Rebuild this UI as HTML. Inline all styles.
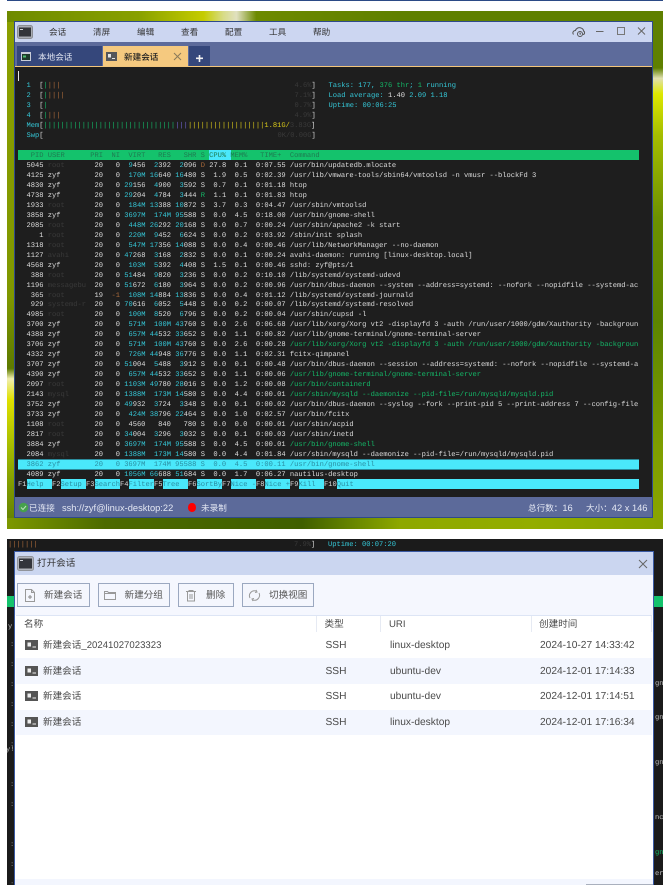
<!DOCTYPE html>
<html><head><meta charset="utf-8"><style>
*{margin:0;padding:0;box-sizing:border-box}
html,body{width:663px;height:885px;overflow:hidden;background:#fff}
body{position:relative;font-family:"Liberation Sans","Noto Sans CJK SC",sans-serif;text-rendering:geometricPrecision;filter:blur(.3px)}
.a{position:absolute}
.t{position:absolute;white-space:nowrap;line-height:12px}
pre{position:absolute;margin-top:2px;font-family:"Liberation Mono",monospace;font-size:7.09px;line-height:9.97px;color:#dcdcdc;text-rendering:geometricPrecision;white-space:pre}
pre i{font-style:normal;color:#35c6d6}
pre s{text-decoration:none;color:#3a3a3a}
pre em{font-style:normal;color:#14b868}
pre u{text-decoration:none;color:#a8693a}
pre b{font-weight:normal;color:#d8c81a}
pre q{quotes:none;color:#6e62c8}
pre q:before,pre q:after{content:none}
pre .h{color:#1f7a50}
pre .sel{color:#2b8ea2}
pre .v{position:absolute;left:276.5px;color:#3a3a3a}
pre .w{position:absolute;left:259.5px;color:#3a3a3a}
pre .r{position:absolute;left:310.5px}
.m{font-size:8.6px;color:#333;top:26px}
.s{font-size:8.6px;color:#e3e7f3;top:501.5px}
.btn{position:absolute;top:583px;height:24px;border:1px solid #9ba8c0;background:#f4f6fd}
.btn span{position:absolute;top:6px;font-size:9.6px;line-height:12px;color:#555;white-space:nowrap}
.d{font-size:10.2px;color:#4a4a4a;line-height:12px}
.row{position:absolute;left:16px;width:636px;height:26px}
</style></head><body>

<div class="a" style="left:7px;top:0;width:656px;height:1px;background:#2b4a86"></div>

<!-- wallpaper -->
<div class="a" style="left:7px;top:11px;width:656px;height:518px;overflow:hidden;background:linear-gradient(180deg,#6b8600 0%,#5f8000 30%,#7f9a00 75%,#86a000 100%)">
 <div class="a" style="left:0;top:0;width:8px;height:518px;background:linear-gradient(180deg,#8b9f00 0,#7f9700 55%,#5d7a00 69%,#f0eeb0 71%,#dfe000 75%,#a0b800 85%,#7d9800 92%,#5f7c00 100%)"></div>
 <div class="a" style="left:646px;top:0;width:10px;height:518px;background:linear-gradient(180deg,#5f8000 0,#5f8000 11%,#e0e0b0 13%,#dde800 16%,#a5bd00 24%,#6c9000 40%,#5d8500 60%,#7f9f00 85%,#8aa500 100%)"></div>
 <div class="a" style="left:0;top:0;width:656px;height:11px;background:linear-gradient(90deg,#6e8a00 0,#88a000 20%,#c5cc00 30%,#d8dc88 33%,#e0e0c0 35%,#6d8a00 38%,#5f8000 60%,#5f8000 100%)"></div>
 <div class="a" style="left:0;top:507px;width:656px;height:11px;background:linear-gradient(90deg,#7d9800 0,#4c6a00 15%,#3f5f00 45%,#6e8c00 54%,#8ea800 60%,#93ad00 80%,#88a400 100%)"></div>
</div>

<!-- main window -->
<div class="a" style="left:14px;top:21px;width:639px;height:497px;border:1px solid #2f4a8c;background:#1e1e1e"></div>
<div class="a" style="left:15px;top:22px;width:637px;height:20px;background:#ccd6f1"></div>
<div class="a" style="left:15px;top:42px;width:637px;height:24px;background:#5d6b9b"></div>
<div class="a" style="left:15px;top:66px;width:637px;height:1px;background:#f3c67c"></div>
<div class="a" style="left:15px;top:497px;width:637px;height:20px;background:#5c6a9a"></div>

<!-- window icon -->
<svg class="a" style="left:17px;top:25px" width="16" height="14"><rect x=".5" y=".5" width="15" height="13" rx="2" fill="#a9acb4" stroke="#8a8d95"/><rect x="2" y="2.5" width="12" height="9" fill="#33353b"/><rect x="3" y="4" width="3" height="1" fill="#cfd2d8"/></svg>
<div class="t m" style="left:49px">会话</div>
<div class="t m" style="left:93px">清屏</div>
<div class="t m" style="left:137px">编辑</div>
<div class="t m" style="left:181px">查看</div>
<div class="t m" style="left:225px">配置</div>
<div class="t m" style="left:269px">工具</div>
<div class="t m" style="left:313px">帮助</div>
<!-- window controls -->
<svg class="a" style="left:572px;top:25px" width="80" height="14" fill="none" stroke="#555" stroke-width="1">
 <path d="M1.5 9.5c-1.5-2 0-4 2-4 .5-2 3-3.500 5.500-2.500 1.500.5 2.500 1.500 2.500 3 1.500.5 1.500 3.500-.5 3.500"/><circle cx="8" cy="9" r="2.500"/><path d="M8 7.500V9h1"/>
 <path d="M24 6.500h7.500" stroke="#666"/><rect x="45.500" y="2.500" width="7" height="7" stroke="#777"/><path d="M66 2.500l7 7M73 2.500l-7 7" stroke="#666"/>
</svg>

<!-- tabs -->
<div class="a" style="left:16.500px;top:46px;width:85.500px;height:20px;background:#35477b"></div>
<svg class="a" style="left:21px;top:52px" width="10" height="9"><rect width="10" height="9" fill="#c8ccd8"/><rect x="1" y="2" width="8" height="6" fill="#1f3a2a"/><rect x="2" y="3.500" width="3" height="2" fill="#4fbf70"/></svg>
<div class="t" style="left:38px;top:51px;font-size:8.600px;color:#dfe3f0">本地会话</div>
<div class="a" style="left:103px;top:46px;width:85px;height:20px;background:#f5c97f"></div>
<svg class="a" style="left:106px;top:52px" width="11" height="9"><rect width="11" height="9" fill="#55565a"/><rect x="2" y="2" width="3" height="3.500" fill="#e6e6e6"/><rect x="6" y="6" width="3" height="1" fill="#e6e6e6"/></svg>
<div class="t" style="left:124px;top:51px;font-size:8.600px;color:#222;font-weight:500">新建会话</div>
<svg class="a" style="left:173px;top:52px" width="9" height="9" stroke="#8a7a5a" stroke-width="1"><path d="M1 1l7 7M8 1l-7 7"/></svg>
<div class="a" style="left:189px;top:46px;width:21px;height:20px;background:#35477b"></div>
<svg class="a" style="left:196px;top:55px" width="7" height="7" fill="#f2f2f2"><rect y="2.500" width="7" height="1.600"/><rect x="2.700" width="1.600" height="7"/></svg>

<!-- terminal -->
<div class="a" style="left:18px;top:71px;width:1px;height:10px;background:#e6e6e6"></div>
<div class="a" style="left:18px;top:150px;width:621px;height:10px;background:#14c26c"></div>
<div class="a" style="left:209px;top:150px;width:22px;height:10px;background:#4ae8fb"></div>
<div class="a" style="left:18px;top:459px;width:621px;height:10.500px;background:#4ae8fb;border:1px solid #2b8a9a;border-width:1px 0"></div>
<div class="a" style="left:26.500px;top:478.500px;width:25.500px;height:10px;background:#4ae8fb"></div>
<div class="a" style="left:60.500px;top:478.500px;width:25.500px;height:10px;background:#4ae8fb"></div>
<div class="a" style="left:94.500px;top:478.500px;width:25.500px;height:10px;background:#4ae8fb"></div>
<div class="a" style="left:128.500px;top:478.500px;width:25.500px;height:10px;background:#4ae8fb"></div>
<div class="a" style="left:162.600px;top:478.500px;width:25.500px;height:10px;background:#4ae8fb"></div>
<div class="a" style="left:196.600px;top:478.500px;width:25.500px;height:10px;background:#4ae8fb"></div>
<div class="a" style="left:230.700px;top:478.500px;width:25.500px;height:10px;background:#4ae8fb"></div>
<div class="a" style="left:264.700px;top:478.500px;width:25.500px;height:10px;background:#4ae8fb"></div>
<div class="a" style="left:298.800px;top:478.500px;width:25.500px;height:10px;background:#4ae8fb"></div>
<div class="a" style="left:337px;top:478.500px;width:302px;height:10px;background:#4ae8fb"></div>

<pre style="left:18px;top:70.200px;width:630px;height:425px;overflow:hidden">

  <i>1</i>  [<em>|</em><u>|||</u><span class="v">4.6%</span><span class="v" style="left:293.500px;color:#d6d6d6">]</span><span class="r"><i>Tasks: </i><i>177, </i><em>376 thr</em><i>; </i><em>1</em><i> running</i></span>
  <i>2</i>  [<em>|</em><u>||||</u><span class="v">7.1%</span><span class="v" style="left:293.500px;color:#d6d6d6">]</span><span class="r"><i>Load average: </i>1.40 <i>2.09 1.18</i></span>
  <i>3</i>  [<em>|</em><span class="v">0.7%</span><span class="v" style="left:293.500px;color:#d6d6d6">]</span><span class="r"><i>Uptime: 00:06:25</i></span>
  <i>4</i>  [<em>|</em><u>|||</u><span class="v">4.9%</span><span class="v" style="left:293.500px;color:#d6d6d6">]</span>
  <i>Mem</i>[<em>|||||||||||||||||||||||||||||||</em><q>|||</q><b>||||||||||||||||||</b><b>1.81G/</b><s>3.83G</s>]
  <i>Swp</i>[<span class="w">0K/0.00G</span><span class="v" style="left:293.500px;color:#d6d6d6">]</span>

<span class="h">   PID USER      PRI  NI  VIRT   RES   SHR S CPU% MEM%   TIME+  Command</span>
  5045 <s>root     </s>  20   0 <i> 9</i>456 <i> 2</i>392 <i> 2</i>096 <u>D</u> 27.8  0.1  0:07.55 /usr/bin/updatedb.mlocate
  4125 zyf        20   0 <i> 170M</i> <i>16</i>640 <i>16</i>480 S  1.9  0.5  0:02.39 /usr/lib/vmware-tools/sbin64/vmtoolsd -n vmusr --blockFd 3
  4830 zyf        20   0 <i>29</i>156 <i> 4</i>900 <i> 3</i>592 S  0.7  0.1  0:01.18 htop
  4738 zyf        20   0 <i>29</i>204 <i> 4</i>784 <i> 3</i>444 <em>R</em>  1.1  0.1  0:01.83 htop
  1933 <s>root     </s>  20   0 <i> 184M</i> <i>13</i>388 <i>10</i>872 S  3.7  0.3  0:04.47 /usr/sbin/vmtoolsd
  3858 zyf        20   0 <i>3697M</i> <i> 174M</i> <i>95</i>588 S  0.0  4.5  0:18.00 /usr/bin/gnome-shell
  2085 <s>root     </s>  20   0 <i> 448M</i> <i>26</i>292 <i>20</i>168 S  0.0  0.7  0:00.24 /usr/sbin/apache2 -k start
     1 <s>root     </s>  20   0 <i> 220M</i> <i> 9</i>452 <i> 6</i>624 S  0.0  0.2  0:03.92 /sbin/init splash
  1318 <s>root     </s>  20   0 <i> 547M</i> <i>17</i>356 <i>14</i>088 S  0.0  0.4  0:00.46 /usr/lib/NetworkManager --no-daemon
  1127 <s>avahi    </s>  20   0 <i>47</i>268 <i> 3</i>168 <i> 2</i>832 S  0.0  0.1  0:00.24 avahi-daemon: running [linux-desktop.local]
  4568 zyf        20   0 <i> 103M</i> <i> 5</i>392 <i> 4</i>408 S  1.5  0.1  0:00.46 sshd: zyf@pts/1
   388 <s>root     </s>  20   0 <i>51</i>484 <i> 9</i>820 <i> 3</i>236 S  0.0  0.2  0:10.10 /lib/systemd/systemd-udevd
  1196 <s>messagebu</s>  20   0 <i>51</i>672 <i> 6</i>180 <i> 3</i>964 S  0.0  0.2  0:00.96 /usr/bin/dbus-daemon --system --address=systemd: --nofork --nopidfile --systemd-ac
   365 <s>root     </s>  19 <u> -1</u> <i> 108M</i> <i>14</i>884 <i>13</i>836 S  0.0  0.4  0:01.12 /lib/systemd/systemd-journald
   929 <s>systemd-r</s>  20   0 <i>70</i>616 <i> 6</i>052 <i> 5</i>448 S  0.0  0.2  0:00.07 /lib/systemd/systemd-resolved
  4985 <s>root     </s>  20   0 <i> 100M</i> <i> 8</i>520 <i> 6</i>796 S  0.0  0.2  0:00.04 /usr/sbin/cupsd -l
  3700 zyf        20   0 <i> 571M</i> <i> 100M</i> <i>43</i>760 S  0.0  2.6  0:06.68 /usr/lib/xorg/Xorg vt2 -displayfd 3 -auth /run/user/1000/gdm/Xauthority -backgroun
  4388 zyf        20   0 <i> 657M</i> <i>44</i>532 <i>33</i>652 S  0.0  1.1  0:00.82 /usr/lib/gnome-terminal/gnome-terminal-server
  3706 zyf        20   0 <i> 571M</i> <i> 100M</i> <i>43</i>760 S  0.0  2.6  0:00.28 <em>/usr/lib/xorg/Xorg vt2 -displayfd 3 -auth /run/user/1000/gdm/Xauthority -backgroun</em>
  4332 zyf        20   0 <i> 726M</i> <i>44</i>948 <i>36</i>776 S  0.0  1.1  0:02.31 fcitx-qimpanel
  3707 zyf        20   0 <i>51</i>004 <i> 5</i>488 <i> 3</i>912 S  0.0  0.1  0:00.48 /usr/bin/dbus-daemon --session --address=systemd: --nofork --nopidfile --systemd-a
  4390 zyf        20   0 <i> 657M</i> <i>44</i>532 <i>33</i>652 S  0.0  1.1  0:00.06 <em>/usr/lib/gnome-terminal/gnome-terminal-server</em>
  2097 <s>root     </s>  20   0 <i>1103M</i> <i>49</i>780 <i>28</i>016 S  0.0  1.2  0:00.08 <em>/usr/bin/containerd</em>
  2143 <s>mysql    </s>  20   0 <i>1388M</i> <i> 173M</i> <i>14</i>580 S  0.0  4.4  0:00.01 <em>/usr/sbin/mysqld --daemonize --pid-file=/run/mysqld/mysqld.pid</em>
  3752 zyf        20   0 <i>49</i>932 <i> 3</i>724 <i> 3</i>348 S  0.0  0.1  0:00.02 /usr/bin/dbus-daemon --syslog --fork --print-pid 5 --print-address 7 --config-file
  3733 zyf        20   0 <i> 424M</i> <i>38</i>796 <i>22</i>464 S  0.0  1.0  0:02.57 /usr/bin/fcitx
  1108 <s>root     </s>  20   0  4560   840   780 S  0.0  0.0  0:00.01 /usr/sbin/acpid
  2817 <s>root     </s>  20   0 <i>34</i>004 <i> 3</i>296 <i> 3</i>032 S  0.0  0.1  0:00.03 /usr/sbin/inetd
  3884 zyf        20   0 <i>3697M</i> <i> 174M</i> <i>95</i>588 S  0.0  4.5  0:00.01 <em>/usr/bin/gnome-shell</em>
  2084 <s>mysql    </s>  20   0 <i>1388M</i> <i> 173M</i> <i>14</i>580 S  0.0  4.4  0:01.84 /usr/sbin/mysqld --daemonize --pid-file=/run/mysqld/mysqld.pid
<span class="sel">  3862 zyf        20   0 3697M  174M 95588 S  0.0  4.5  0:00.11 /usr/bin/gnome-shell</span>
  4089 zyf        20   0 <i>1056M</i> <i>66</i>688 <i>51</i>684 S  0.0  1.7  0:06.27 nautilus-desktop
F1<span class="sel">Help  </span>F2<span class="sel">Setup </span>F3<span class="sel">Search</span>F4<span class="sel">Filter</span>F5<span class="sel">Tree  </span>F6<span class="sel">SortBy</span>F7<span class="sel">Nice -</span>F8<span class="sel">Nice +</span>F9<span class="sel">Kill  </span>F10<span class="sel">Quit</span></pre>

<!-- status bar -->
<svg class="a" style="left:18px;top:502px" width="11" height="11"><circle cx="5.500" cy="5.500" r="4.800" fill="#46a04c"/><path d="M3 5.500l2 2 3-3.500" fill="none" stroke="#bfe0bf" stroke-width="1"/></svg>
<div class="t s" style="left:29px">已连接</div>
<div class="t s" style="left:62px;font-size:9.300px">ssh://zyf@linux-desktop:22</div>
<div class="a" style="left:188px;top:503px;width:7.500px;height:8.500px;border-radius:50%;background:#f00"></div>
<div class="t s" style="left:201px">未录制</div>
<div class="t s" style="left:528px">总行数：<span style="font-size:9.300px">16</span></div>
<div class="t s" style="left:586px">大小：<span style="font-size:9.300px">42 x 146</span></div>

<!-- second screenshot -->
<div class="a" style="left:7px;top:539px;width:656px;height:346px;background:#1b1b1b;overflow:hidden">
 <div class="a" style="left:0;top:57px;width:10px;height:11px;background:#14c26c"></div>
 <div class="a" style="left:640px;top:57px;width:16px;height:11px;background:#14c26c"></div>
 <pre style="left:1px;top:0;color:#a8693a;font-size:7.090px">|||||||</pre>
 <pre style="left:287px;top:0;color:#3a3a3a">7.9%<span style="color:#d6d6d6">]</span></pre>
 <pre style="left:321px;top:0;color:#35c6d6">Uptime: 00:07:20</pre>
 <pre style="left:1px;top:82px;color:#bbb">y!</pre>
 <pre style="left:-1px;top:205px;color:#bbb">y!</pre>
 <pre style="left:3px;top:100px;color:#888">:

:

:

:

:

:</pre>
 <pre style="left:3px;top:240px;color:#888">:

:



:

:

:</pre>
 <pre style="left:648px;top:139px;color:#bbb">gn</pre>
 <pre style="left:648px;top:173px;color:#bbb">gn</pre>
 <pre style="left:648px;top:218px;color:#bbb">gn</pre>
 <pre style="left:648px;top:273px;color:#bbb">nc</pre>
 <pre style="left:648px;top:308px;color:#14b868">gn</pre>
 <pre style="left:648px;top:329px;color:#bbb">er</pre>
</div>

<!-- dialog -->
<div class="a" style="left:14px;top:551px;width:640px;height:334px;background:#fff;border:1px solid #3a5aa4;border-bottom:0"></div>
<div class="a" style="left:15px;top:552px;width:638px;height:23px;background:#cbd6f0"></div>
<div class="a" style="left:15px;top:575px;width:638px;height:40px;background:#f5f7fe"></div>
<svg class="a" style="left:17px;top:556px" width="17" height="15"><rect x=".5" y=".5" width="16" height="14" rx="2" fill="#b0b3ba" stroke="#90939a"/><rect x="2" y="2.500" width="13" height="10" fill="#33353b"/><rect x="3" y="4" width="3" height="1" fill="#cfd2d8"/></svg>
<div class="t" style="left:37px;top:558px;font-size:9.600px;color:#333">打开会话</div>
<svg class="a" style="left:638px;top:559px" width="10" height="10" stroke="#666" stroke-width="1"><path d="M1 1l8 8M9 1l-8 8"/></svg>

<div class="btn" style="left:17px;width:73px"><svg class="a" style="left:6px;top:4px" width="12" height="15" fill="none" stroke="#999"><path d="M1.500 1.500h6l3 3v9h-9zM7.500 1.500v3h3"/><path d="M6 7v4M4 9h4" stroke="#888"/></svg><span style="left:26px">新建会话</span></div>
<div class="btn" style="left:97.500px;width:72.500px"><svg class="a" style="left:4px;top:5px" width="14" height="12" fill="none" stroke="#999"><path d="M1.500 2.500v8h11v-7h-7l-1-1zM1.500 4.500h11"/></svg><span style="left:26px">新建分组</span></div>
<div class="btn" style="left:178px;width:56px"><svg class="a" style="left:6px;top:5px" width="12" height="13" fill="none" stroke="#999"><path d="M1 2.500h10M4 2.500v-1h4v1M2.500 2.500v9.500h7v-9.500M5 5v5M7 5v5"/></svg><span style="left:27px">删除</span></div>
<div class="btn" style="left:242px;width:72px"><svg class="a" style="left:5px;top:5px" width="13" height="13" fill="none" stroke="#999"><path d="M2 9a5 5 0 0 1 6-7M11 4a5 5 0 0 1-6 7"/><path d="M8 1l1 2-2 .5M5 12l-1-2 2-.5"/></svg><span style="left:26px">切换视图</span></div>

<div class="a" style="left:16px;top:615px;width:636px;height:1px;background:#dde5f5"></div>
<div class="a" style="left:316px;top:616px;width:1px;height:16px;background:#e6eaf3"></div>
<div class="a" style="left:380px;top:616px;width:1px;height:16px;background:#e6eaf3"></div>
<div class="a" style="left:531px;top:616px;width:1px;height:16px;background:#e6eaf3"></div>
<div class="a" style="left:651px;top:616px;width:1px;height:16px;background:#e6eaf3"></div>
<div class="t d" style="left:24px;top:619px;font-size:9.600px">名称</div>
<div class="t d" style="left:324.500px;top:619px;font-size:9.600px">类型</div>
<div class="t d" style="left:389px;top:619px;font-size:9.600px">URI</div>
<div class="t d" style="left:539px;top:619px;font-size:9.600px">创建时间</div>

<div class="row" style="top:658px;background:#f3f6fe"></div>
<div class="row" style="top:709.500px;height:25.500px;background:#f3f6fe"></div>

<svg class="a" style="left:25px;top:640px" width="13" height="10"><rect width="13" height="10" fill="#555"/><rect x="2.500" y="2.500" width="3.500" height="4" fill="#eee"/><rect x="7.500" y="6.500" width="3.500" height="1" fill="#eee"/></svg>
<svg class="a" style="left:25px;top:666px" width="13" height="10"><rect width="13" height="10" fill="#555"/><rect x="2.500" y="2.500" width="3.500" height="4" fill="#eee"/><rect x="7.500" y="6.500" width="3.500" height="1" fill="#eee"/></svg>
<svg class="a" style="left:25px;top:691px" width="13" height="10"><rect width="13" height="10" fill="#555"/><rect x="2.500" y="2.500" width="3.500" height="4" fill="#eee"/><rect x="7.500" y="6.500" width="3.500" height="1" fill="#eee"/></svg>
<svg class="a" style="left:25px;top:717px" width="13" height="10"><rect width="13" height="10" fill="#555"/><rect x="2.500" y="2.500" width="3.500" height="4" fill="#eee"/><rect x="7.500" y="6.500" width="3.500" height="1" fill="#eee"/></svg>

<div class="t d" style="left:43px;top:640px;font-size:9.600px">新建会话_20241027023323</div>
<div class="t d" style="left:325.500px;top:640px">SSH</div>
<div class="t d" style="left:390px;top:640px">linux-desktop</div>
<div class="t d" style="left:540px;top:640px">2024-10-27 14:33:42</div>
<div class="t d" style="left:43px;top:666px;font-size:9.600px">新建会话</div>
<div class="t d" style="left:325.500px;top:666px">SSH</div>
<div class="t d" style="left:390px;top:666px">ubuntu-dev</div>
<div class="t d" style="left:540px;top:666px">2024-12-01 17:14:33</div>
<div class="t d" style="left:43px;top:691px;font-size:9.600px">新建会话</div>
<div class="t d" style="left:325.500px;top:691px">SSH</div>
<div class="t d" style="left:390px;top:691px">ubuntu-dev</div>
<div class="t d" style="left:540px;top:691px">2024-12-01 17:14:51</div>
<div class="t d" style="left:43px;top:717px;font-size:9.600px">新建会话</div>
<div class="t d" style="left:325.500px;top:717px">SSH</div>
<div class="t d" style="left:390px;top:717px">linux-desktop</div>
<div class="t d" style="left:540px;top:717px">2024-12-01 17:16:34</div>

<div class="a" style="left:15px;top:879px;width:638px;height:6px;background:#f3f6fe"></div>
<div class="a" style="left:586px;top:884px;width:67px;height:1px;background:#a9b0bd"></div>
</body></html>
